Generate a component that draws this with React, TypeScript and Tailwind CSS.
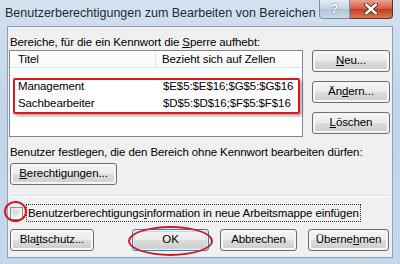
import React from 'react';

const font = { fontFamily: '"Liberation Sans", Arial, sans-serif' };

const WinButton = ({
  children,
  className = '',
  isDefault = false,
}: {
  children: React.ReactNode;
  className?: string;
  isDefault?: boolean;
}) => (
  <div
    className={`h-[22px] rounded-[3px] border ${
      isDefault ? 'border-[#3c7fb1]' : 'border-[#707070]'
    } p-px ${className}`}
  >
    <div
      className={`flex h-full items-center justify-center rounded-[2px] border ${
        isDefault ? 'border-[#b3ddf6]' : 'border-[#fcfcfc]'
      } bg-[linear-gradient(to_bottom,#f2f2f2_0%,#ebebeb_50%,#dddddd_50%,#cfcfcf_100%)] text-black`}
    >
      {children}
    </div>
  </div>
);

const App = () => {
  return (
    <div
      className="flex h-[264px] w-[400px] flex-col overflow-hidden bg-[linear-gradient(to_bottom,#d3e1ef,#c2d5e9_40%,#c6d8ec)]"
      style={font}
    >
      {/* title bar */}
      <div className="flex h-[26px] items-start justify-between">
        <span className="whitespace-nowrap pl-[5px] pt-[4px] text-[12.5px] text-[#1e2a3a]">
          Benutzerberechtigungen zum Bearbeiten von Bereichen
        </span>
        <div className="mr-[7px] flex shrink-0">
          <div className="flex h-[19px] w-[31px] items-center justify-center rounded-bl-[4px] border border-t-0 border-[#7c8ea3] bg-[linear-gradient(to_bottom,#e6eef7,#c4d3e3_50%,#b1c3d7_50%,#c9d8e8)] text-[13px] font-bold text-white [text-shadow:0_0_2px_#4b5c70]">
            ?
          </div>
          <div className="flex h-[19px] w-[43px] items-center justify-center rounded-br-[4px] border border-l-0 border-t-0 border-[#6b2a22] bg-[linear-gradient(to_bottom,#e8a493,#d4583f_50%,#c43a1c_50%,#d67a5c)]">
            <svg width="14" height="12" viewBox="0 0 14 12">
              <path
                d="M2 1.5 L12 10.5 M12 1.5 L2 10.5"
                stroke="#4a1a10"
                strokeWidth="4"
                strokeLinecap="round"
              />
              <path
                d="M2 1.5 L12 10.5 M12 1.5 L2 10.5"
                stroke="#ffffff"
                strokeWidth="2.4"
                strokeLinecap="round"
              />
            </svg>
          </div>
        </div>
      </div>

      {/* client area */}
      <div className="mx-[7px] mb-[6px] flex-1 border border-[#8aa1bb] bg-[#f0f0f0] pl-[1px] pr-[2px] pt-[7px] text-[11.5px] tracking-[-0.1px] text-black">
        <div className="h-[16px] pl-[1px] leading-[16px]">
          Bereiche, für die ein Kennwort die <span className="underline">S</span>perre aufhebt:
        </div>

        <div className="flex">
          {/* list view */}
          <div className="relative h-[87px] w-[294px] border border-[#828790] bg-white">
            <div className="flex h-[17px] border-b border-[#e5e5e5] bg-[linear-gradient(to_bottom,#ffffff,#f7f8f9)] leading-[16px]">
              <div className="w-[146px] border-r border-[#e5e5e5] pl-[8px]">Titel</div>
              <div className="pl-[6px]">Bezieht sich auf Zellen</div>
            </div>
            <div className="mt-[10px]">
              <div className="flex h-[17px] leading-[17px]">
                <div className="w-[146px] pl-[8px]">Management</div>
                <div className="pl-[7px]">$E$5:$E$16;$G$5:$G$16</div>
              </div>
              <div className="flex h-[17px] leading-[17px]">
                <div className="w-[146px] pl-[8px]">Sachbearbeiter</div>
                <div className="pl-[7px]">$D$5:$D$16;$F$5:$F$16</div>
              </div>
            </div>
            <div className="absolute left-[3px] top-[27px] h-[36px] w-[287px] rounded-[2px] border-2 border-[#e0151f] shadow-[2px_2px_3px_rgba(0,0,0,0.35)]" />
          </div>

          {/* side buttons */}
          <div className="ml-[9px] flex flex-col gap-[9px]">
            <WinButton className="w-[78px]">
              <span>
                <span className="underline">N</span>eu...
              </span>
            </WinButton>
            <WinButton className="w-[78px]">
              <span>
                Än<span className="underline">d</span>ern...
              </span>
            </WinButton>
            <WinButton className="w-[78px]">
              <span>
                <span className="underline">L</span>öschen
              </span>
            </WinButton>
          </div>
        </div>

        <div className="mt-[7px] h-[16px] pl-[1px] leading-[16px]">
          Benutzer festlegen, die den Bereich ohne Kennwort bearbeiten dürfen:
        </div>
        <WinButton className="ml-[1px] mt-[3px] w-[107px]">
          <span>
            <span className="underline">B</span>erechtigungen...
          </span>
        </WinButton>

        <div className="mt-[10px] h-[2px] border-b border-t border-b-white border-t-[#d5dfe5]" />

        {/* checkbox row */}
        <div className="relative mt-[7px] flex h-[18px] items-center">
          <div className="ml-[1px] h-[13px] w-[13px] border border-[#8e8f8f] bg-[linear-gradient(135deg,#dcdcdc,#ffffff)] p-px">
            <div className="h-full w-full border border-[#f4f4f4] bg-[linear-gradient(135deg,#cbcbcb,#f6f6f6)]" />
          </div>
          <div className="ml-[3px] h-[18px] border border-dotted border-[#333] px-[1px] leading-[16px]">
            Benutzerberechtigungs<span className="underline">i</span>nformation in neue Arbeitsmappe einfügen
          </div>
          <div className="absolute left-[-5px] top-[-3px] h-[21px] w-[23px] rounded-[50%] border-2 border-[#d01a22]" />
        </div>

        {/* bottom buttons */}
        <div className="relative mt-[7px] flex">
          <WinButton className="ml-[1px] w-[84px]">
            <span>
              Bla<span className="underline">t</span>tschutz...
            </span>
          </WinButton>
          <WinButton className="ml-[38px] w-[77px]" isDefault>
            OK
          </WinButton>
          <WinButton className="ml-[11px] w-[77px]">Abbrechen</WinButton>
          <WinButton className="ml-[11px] w-[81px]">
            <span>
              Überne<span className="underline">h</span>men
            </span>
          </WinButton>
          <div className="absolute left-[119px] top-[-3px] h-[30px] w-[85px] rounded-[50%] border-2 border-[#d01a22]" />
        </div>
      </div>
    </div>
  );
};

export default App;
